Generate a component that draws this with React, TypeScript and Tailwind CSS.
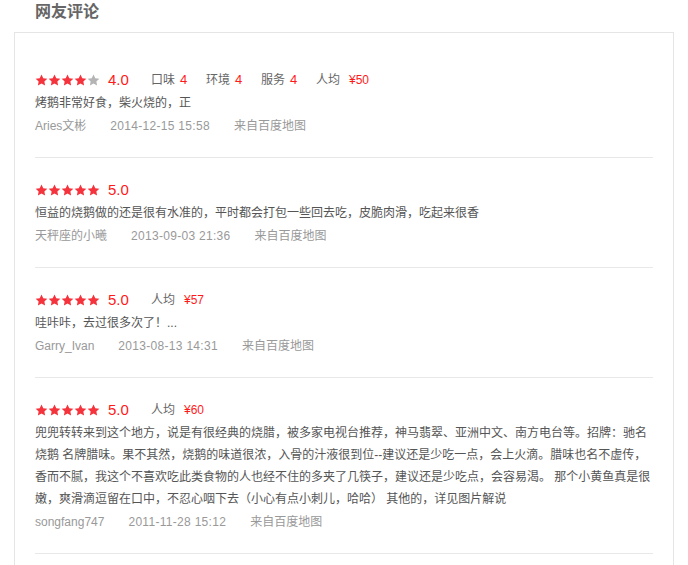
import React from "react";

interface Review {
  rating: number;
  scores?: { label: string; value: string }[];
  price?: string;
  lines: string[];
  user: string;
  time: string;
}

const reviews: Review[] = [
  {
    rating: 4,
    scores: [
      { label: "口味", value: "4" },
      { label: "环境", value: "4" },
      { label: "服务", value: "4" },
    ],
    price: "¥50",
    lines: ["烤鹅非常好食，柴火烧的，正"],
    user: "Aries文彬",
    time: "2014-12-15 15:58",
  },
  {
    rating: 5,
    lines: ["恒益的烧鹅做的还是很有水准的，平时都会打包一些回去吃，皮脆肉滑，吃起来很香"],
    user: "天秤座的小曦",
    time: "2013-09-03 21:36",
  },
  {
    rating: 5,
    price: "¥57",
    lines: ["哇咔咔，去过很多次了！..."],
    user: "Garry_Ivan",
    time: "2013-08-13 14:31",
  },
  {
    rating: 5,
    price: "¥60",
    lines: [
      "兜兜转转来到这个地方，说是有很经典的烧腊，被多家电视台推荐，神马翡翠、亚洲中文、南方电台等。招牌：驰名",
      "烧鹅 名牌腊味。果不其然，烧鹅的味道很浓，入骨的汁液很到位--建议还是少吃一点，会上火滴。腊味也名不虚传，",
      "香而不腻，我这个不喜欢吃此类食物的人也经不住的多夹了几筷子，建议还是少吃点，会容易渴。 那个小黄鱼真是很",
      "嫩，爽滑滴逗留在口中，不忍心咽下去（小心有点小刺儿，哈哈） 其他的，详见图片解说",
    ],
    user: "songfang747",
    time: "2011-11-28 15:12",
  },
];

const Star: React.FC<{ on: boolean }> = ({ on }) => (
  <svg width="13" height="12" viewBox="0 0 24 23">
    <path
      d="M12 0.8l3.4 7.2 7.8 1-5.7 5.4 1.4 7.8L12 18.4l-6.9 3.8 1.4-7.8L0.8 9l7.8-1z"
      fill={on ? "#f5333c" : "#b4b4b4"}
    />
  </svg>
);

const ReviewItem: React.FC<{ r: Review }> = ({ r }) => (
  <div className="pt-[20px] pb-[20px] border-b border-[#e8e8e8]">
    <div className="flex items-center h-6">
      <div className="flex items-center">
        {[0, 1, 2, 3, 4].map((i) => (
          <Star key={i} on={i < r.rating} />
        ))}
      </div>
      <span className="ml-[8px] w-[43px] text-[15px] text-[#ff1a1a] leading-6">
        {r.rating}.0
      </span>
      <div className="flex items-center text-[12px] text-[#666]">
        {r.scores?.map((s) => (
          <span key={s.label} className="w-[55px]">
            {s.label}
            <span className="ml-[5px] text-[13px] text-[#ff1a1a]">{s.value}</span>
          </span>
        ))}
        {r.price && (
          <span>
            人均
            <span className="ml-[9px] text-[#ff1a1a] text-[12px]">{r.price}</span>
          </span>
        )}
      </div>
    </div>
    <div className="text-[12px] leading-[22px] text-[#555]">
      {r.lines.map((l, i) => (
        <div key={i} className="whitespace-nowrap">
          {l}
        </div>
      ))}
    </div>
    <div className="mt-[1px] flex text-[12px] leading-[22px] text-[#999]">
      <span className="mr-6">{r.user}</span>
      <span className="mr-6 tracking-[0.3px]">{r.time}</span>
      <span>来自百度地图</span>
    </div>
  </div>
);

export default function App() {
  return (
    <div
      className="w-[688px] min-h-[565px] bg-white"
      style={{ fontFamily: '"Liberation Sans", "Noto Sans CJK SC", sans-serif' }}
    >
      <h2 className="pl-[35px] text-[16px] leading-6 font-bold text-[#666]">网友评论</h2>
      <div className="mx-[14px] mt-[8px] border border-[#e5e5e5] pt-[15px] px-[20px] pb-[40px]">
        {reviews.map((r, i) => (
          <ReviewItem key={i} r={r} />
        ))}
      </div>
    </div>
  );
}
